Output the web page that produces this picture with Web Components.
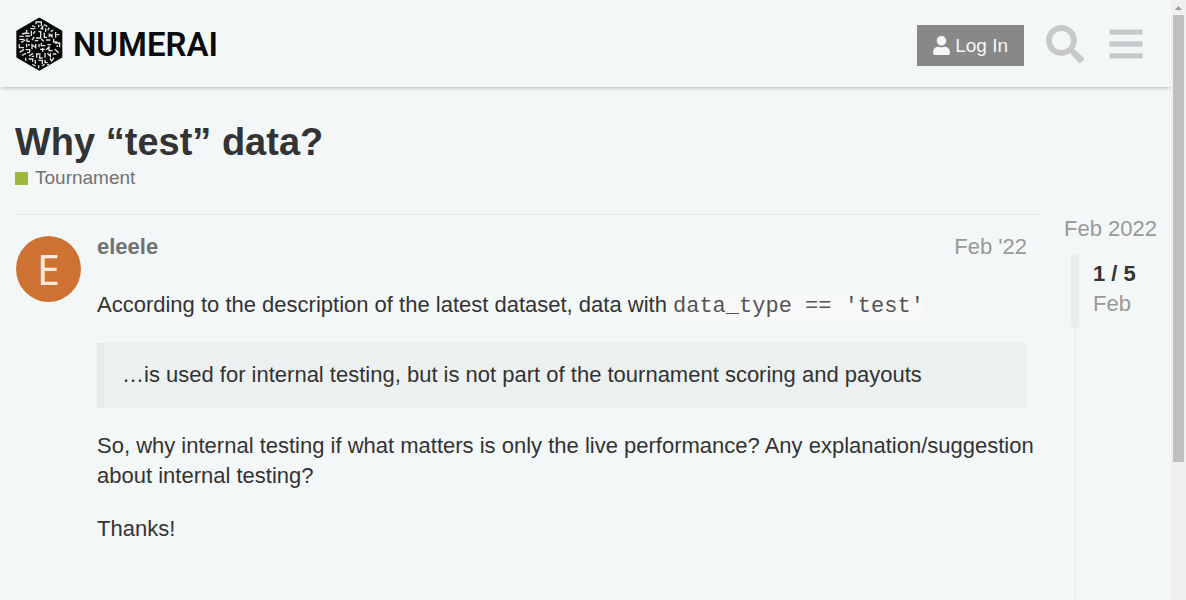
<!DOCTYPE html>
<html lang="en">
<head>
<meta charset="utf-8">
<meta name="viewport" content="width=device-width, initial-scale=1">
<title>Why “test” data? - Tournament - Numerai Forum</title>
<style>
  html, body { margin: 0; height: 100%; overflow: hidden; }
  body {
    --primary: #333; --medium: #999; --high: #717274; --line: #e9eaeb;
    background: #f3f7f8; color: var(--primary);
    font: 22px/30px "Liberation Sans", Arial, sans-serif;
  }
</style>
</head>
<body>
<forum-app>
  <forum-header slot="header"></forum-header>
  <topic-title slot="title" category="Tournament">Why “test” data?</topic-title>
  <topic-post slot="posts" author="eleele" date="Feb '22" initial="E">
    <p>According to the description of the latest dataset, data with <inline-code>data_type == 'test'</inline-code></p>
    <quote-block>…is used for internal testing, but is not part of the tournament scoring and payouts</quote-block>
    <p>So, why internal testing if what matters is only the live performance? Any explanation/suggestion about internal testing?</p>
    <p>Thanks!</p>
  </topic-post>
  <topic-timeline slot="timeline" start="Feb 2022" position="1 / 5" now="Feb"></topic-timeline>
</forum-app>
<script>
class Base extends HTMLElement {
  connectedCallback() {
    if (this.shadowRoot) return;
    this.attachShadow({ mode: 'open' }).innerHTML = this.view();
  }
  attr(name) { return this.getAttribute(name) || ''; }
}

customElements.define('forum-app', class extends Base {
  view() { return `
    <style>
      :host { display: flex; height: 100%; }
      .page { flex: 1; min-width: 0; display: flex; flex-direction: column; overflow: hidden; }
      main { flex: 1; display: flex; flex-direction: column; padding: 32px 15px 0; }
      .columns { flex: 1; display: flex; gap: 21px; margin-top: 23px; }
      .stream { flex: 1; min-width: 0; border-top: 1px solid var(--line); }
    </style>
    <div class="page">
      <slot name="header"></slot>
      <main>
        <slot name="title"></slot>
        <div class="columns">
          <div class="stream"><slot name="posts"></slot></div>
          <slot name="timeline"></slot>
        </div>
      </main>
    </div>
    <scroll-track></scroll-track>`; }
});

customElements.define('scroll-track', class extends Base {
  view() { return `
    <style>
      :host { display: flex; flex-direction: column; align-items: center; width: 15px; background: #f0f0f0; }
      svg { display: block; width: 15px; height: 15px; }
      .thumb { width: 11px; height: 447px; background: #bfbfbf; }
    </style>
    <svg viewBox="0 0 15 15" aria-hidden="true"><path d="M4 10h7L7.500 6z" fill="#9a9a9a"/></svg>
    <div class="thumb"></div>`; }
});

customElements.define('forum-header', class extends Base {
  view() { return `
    <style>
      :host { display: block; position: relative; box-shadow: 0 2px 4px -1px rgba(0,0,0,.25); }
      header { display: flex; align-items: center; justify-content: space-between; height: 87px; padding: 0 28px 0 15px; }
      nav { display: flex; align-items: center; gap: 22px; }
      button { font: inherit; border: 0; margin: 0; padding: 0; background: none; cursor: pointer; }
      .login { display: flex; align-items: center; gap: 5px; height: 41px; padding: 0 16px; margin-top: 4px;
        background: #888; color: #f3f7f8; font-size: 19px; }
      .icon { color: #c8c9cb; }
      svg { display: block; fill: currentColor; }
      .icons { display: flex; align-items: center; gap: 25px; }
    </style>
    <header>
      <brand-logo></brand-logo>
      <nav>
        <button class="login"><svg width="17" height="19" viewBox="0 0 448 512" aria-hidden="true"><path d="M224 256c70.700 0 128-57.300 128-128S294.700 0 224 0 96 57.300 96 128s57.300 128 128 128zm89.600 32h-16.700c-22.200 10.200-46.900 16-72.900 16s-50.600-5.800-72.900-16h-16.700C60.200 288 0 348.200 0 422.400V464c0 26.500 21.500 48 48 48h352c26.500 0 48-21.500 48-48v-41.600c0-74.200-60.200-134.400-134.400-134.400z"/></svg><span>Log In</span></button>
        <div class="icons">
          <button class="icon" aria-label="Search"><svg width="38" height="38" viewBox="0 0 512 512"><path d="M505 442.700L405.300 343c-4.500-4.500-10.600-7-17-7H372c27.600-35.300 44-79.700 44-128C416 93.100 322.900 0 208 0S0 93.100 0 208s93.100 208 208 208c48.300 0 92.700-16.400 128-44v16.300c0 6.400 2.500 12.500 7 17l99.700 99.700c9.400 9.400 24.600 9.400 33.900 0l28.300-28.300c9.400-9.400 9.400-24.600.1-34zM208 336c-70.700 0-128-57.200-128-128 0-70.700 57.200-128 128-128 70.700 0 128 57.200 128 128 0 70.700-57.200 128-128 128z"/></svg></button>
          <button class="icon" aria-label="Menu"><svg width="34" height="38" viewBox="0 0 448 512"><path d="M16 132h416c8.800 0 16-7.200 16-16V76c0-8.800-7.200-16-16-16H16C7.200 60 0 67.200 0 76v40c0 8.800 7.200 16 16 16zm0 160h416c8.800 0 16-7.200 16-16v-40c0-8.800-7.200-16-16-16H16c-8.800 0-16 7.200-16 16v40c0 8.800 7.200 16 16 16zm0 160h416c8.800 0 16-7.200 16-16v-40c0-8.800-7.200-16-16-16H16c-8.800 0-16 7.200-16 16v40c0 8.800 7.200 16 16 16z"/></svg></button>
        </div>
      </nav>
    </header>`; }
});

customElements.define('brand-logo', class extends Base {
  view() { return `
    <style>
      :host { display: block; }
      a { display: flex; align-items: center; gap: 10px; color: #0b0c0d; text-decoration: none;
        font: 600 33px/40px Roboto, "Liberation Sans", sans-serif; }
      svg { display: block; }
      span { padding-top: 2px; }
    </style>
    <a href="#"><svg width="48" height="54" viewBox="15 15 144 162" aria-hidden="true">
      <path d="M88 20 154 58V135L88 173 22 135V58z" fill="#060708" stroke="#060708" stroke-width="6" stroke-linejoin="round"/>
      <path fill="none" stroke="#dfe3e4" stroke-width="4" d="M78 37V30H94V43M86 38V46M66 41 76 45M102 38 112 43M61 50H76M92 52 98 44V53M107 49V60M118 47 113 55M130 54 122 59M50 54V64H58M64 56V72M36 66 48 63M76 58 69 65M85 59H92V78H78M103 62V76H111M118 76V67L126 74V65M137 60V77M148 68H140M28 73H41M46 72H60M51 79V88H60M28 82H43M33 91 46 84M73 75 66 84M85 86H74M94 81 101 88M108 84H121M131 80V90H142M28 97V107H42M50 95V106M57 96V102M66 112V98L77 107V96M87 96V106M94 93V101H106M112 98H122M135 93H149V106M142 99V105M29 121 42 112M47 113H59V120M51 122H60M90 112H104M98 108V119M108 113 117 105V116H128M134 111 146 122M36 130 48 124M57 132 69 124M65 133H72M80 124V137M80 126H92M89 130V138H98M105 122V137M112 124 121 133V124M128 126H139M47 137V146M56 141H68V149M76 144V155M85 145H97V156M105 143V152H113M120 139 125 147 132 137M67 157 77 162M86 160V169M96 162 104 157M111 158H117"/>
    </svg><span>NUMERAI</span></a>`; }
});

customElements.define('topic-title', class extends Base {
  view() { return `
    <style>
      :host { display: block; }
      h1 { margin: 0; font-size: 38px; line-height: 46px; font-weight: 700; }
      a { display: inline-flex; align-items: center; gap: 7px; color: var(--high); font-size: 19px; line-height: 26px; text-decoration: none; }
      i { width: 13px; height: 13px; background: #9eb83b; }
      .category { display: flex; }
    </style>
    <h1><slot></slot></h1>
    <div class="category"><a href="#"><i></i><span>${this.attr('category')}</span></a></div>`; }
});

customElements.define('topic-post', class extends Base {
  view() { return `
    <style>
      :host { display: block; }
      article { display: grid; grid-template-columns: 66px 1fr; gap: 15px; padding: 17px 16px 0 1px; }
      .avatar { display: flex; align-items: center; justify-content: center; width: 65px; height: 66px; margin-top: 4px;
        border-radius: 50%; background: #ce7233; color: #fae9dd; font: 400 41px/66px "Noto Sans", sans-serif; text-decoration: none; }
      header { display: flex; justify-content: space-between; }
      .name { color: var(--high); font-weight: 700; text-decoration: none; }
      .date { color: var(--medium); text-decoration: none; }
      .cooked { display: flex; flex-direction: column; gap: 23px; margin-top: 28px; }
      /* Paragraphs may run into the post's right gutter. */
      ::slotted(p) { margin: 0 -16px 0 0; }
    </style>
    <article>
      <a class="avatar" href="#">${this.attr('initial')}</a>
      <div>
        <header>
          <a class="name" href="#">${this.attr('author')}</a>
          <a class="date" href="#">${this.attr('date')}</a>
        </header>
        <div class="cooked"><slot></slot></div>
      </div>
    </article>`; }
});

customElements.define('inline-code', class extends Base {
  view() { return `
    <style>
      :host { display: inline; }
      code { background: #f8f8f8; color: #555; font: 22px "Liberation Mono", monospace; }
    </style><code><slot></slot></code>`; }
});

customElements.define('quote-block', class extends Base {
  view() { return `
    <style>
      :host { display: block; }
      blockquote { margin: 0; padding: 17px 18px 18px; border-left: 7px solid #e9eaea; background: #ecf0f1; }
    </style><blockquote><slot></slot></blockquote>`; }
});

customElements.define('topic-timeline', class extends Base {
  view() { return `
    <style>
      :host { display: flex; flex-direction: column; width: 92px; color: var(--medium); white-space: nowrap; }
      .start { color: inherit; text-decoration: none; }
      .scroller { display: flex; gap: 14px; margin: 10px 0 0 7px; }
      .handle { width: 8px; height: 74px; border-radius: 4px; background: #ebecec; }
      .label { padding-top: 5px; }
      strong { display: block; color: var(--primary); }
      .rail { flex: 1; width: 1px; margin-left: 11px; background: #e6eaeb; }
    </style>
    <a class="start" href="#">${this.attr('start')}</a>
    <div class="scroller"><div class="handle"></div><div class="label"><strong>${this.attr('position')}</strong><span>${this.attr('now')}</span></div></div>
    <div class="rail"></div>`; }
});
</script>
</body>
</html>
